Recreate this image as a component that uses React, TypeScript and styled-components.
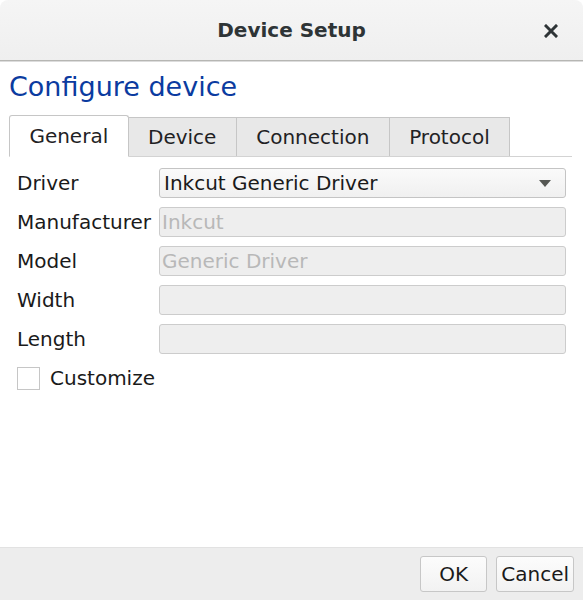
import * as React from "react";
import styled, { createGlobalStyle } from "styled-components";

const GlobalStyle = createGlobalStyle`
  html, body {
    margin: 0;
    padding: 0;
    background: #ffffff;
  }
  body {
    font-family: "DejaVu Sans", "Liberation Sans", sans-serif;
    color: #1a1a1a;
  }
`;

type Field = {
  label: string;
  value?: string;
};

const tabs = ["General", "Device", "Connection", "Protocol"];

const fields: Array<Field> = [
  { label: "Manufacturer", value: "Inkcut" },
  { label: "Model", value: "Generic Driver" },
  { label: "Width" },
  { label: "Length" },
];

function App() {
  const [activeTab, setActiveTab] = React.useState<string>("General");
  const [customize, setCustomize] = React.useState<boolean>(false);

  return (
    <DialogWrapper>
      <GlobalStyle />
      <TitleBar>
        <Title>Device Setup</Title>
        <CloseButton aria-label="Close">
          <svg width="14" height="14" viewBox="0 0 14 14">
            <path
              d="M2 2 L12 12 M12 2 L2 12"
              stroke="#2e3436"
              strokeWidth="3"
              strokeLinecap="square"
            />
          </svg>
        </CloseButton>
      </TitleBar>
      <Content>
        <Heading>Configure device</Heading>
        <TabBar>
          {tabs.map((tab) => (
            <Tab
              key={tab}
              $active={tab === activeTab}
              onClick={() => setActiveTab(tab)}
            >
              {tab}
            </Tab>
          ))}
        </TabBar>
        <Form>
          <Label>Driver</Label>
          <Combo>
            <span>Inkcut Generic Driver</span>
            <svg width="12" height="7" viewBox="0 0 12 7">
              <path d="M0 0 L12 0 L6 7 Z" fill="#555753" />
            </svg>
          </Combo>
          {fields.map((field) => (
            <React.Fragment key={field.label}>
              <Label>{field.label}</Label>
              <DisabledInput>{field.value}</DisabledInput>
            </React.Fragment>
          ))}
        </Form>
        <CheckRow onClick={() => setCustomize(!customize)}>
          <CheckBox>{customize ? "✓" : ""}</CheckBox>
          <span>Customize</span>
        </CheckRow>
      </Content>
      <ButtonBar>
        <DialogButton>OK</DialogButton>
        <DialogButton>Cancel</DialogButton>
      </ButtonBar>
    </DialogWrapper>
  );
}

export default App;

const DialogWrapper = styled.div`
  display: flex;
  flex-direction: column;
  width: 583px;
  height: 600px;
  background: #ffffff;
  overflow: hidden;
`;

const TitleBar = styled.header`
  position: relative;
  display: flex;
  justify-content: center;
  align-items: center;
  height: 61px;
  box-sizing: border-box;
  background: linear-gradient(#f5f5f5, #efefef);
  border-bottom: 1px solid #b6b6b3;
  border-radius: 8px 8px 0 0;
  box-shadow: 0 1px 0 #dcdcdc;
`;

const Title = styled.h1`
  margin: 0;
  font-size: 20px;
  font-weight: 700;
  color: #2e3436;
`;

const CloseButton = styled.div`
  position: absolute;
  right: 25px;
  top: 24px;
  display: flex;
`;

const Content = styled.section`
  flex: 1;
  display: flex;
  flex-direction: column;
  padding: 10px 10px 0 9px;
`;

const Heading = styled.h2`
  margin: 0 0 12px 0;
  font-size: 27px;
  font-weight: 400;
  color: #0b3ba0;
  line-height: 32px;
`;

const TabBar = styled.nav`
  display: flex;
  align-items: flex-end;
  height: 41px;
  margin-right: 1px;
  border-bottom: 1px solid #d3d3d3;
`;

const Tab = styled.div<{ $active: boolean }>`
  display: flex;
  align-items: center;
  justify-content: center;
  box-sizing: border-box;
  height: ${(p) => (p.$active ? "42px" : "39px")};
  margin-bottom: ${(p) => (p.$active ? "-1px" : "0")};
  padding: 0 19.4px;
  font-size: 20px;
  color: #1f2224;
  background: ${(p) => (p.$active ? "#ffffff" : "#e8e8e8")};
  border: 1px solid #c6c6c6;
  border-bottom: ${(p) => (p.$active ? "1px solid #ffffff" : "none")};
  border-left-width: ${(p) => (p.$active ? "1px" : "0")};
  border-radius: ${(p) => (p.$active ? "3px 3px 0 0" : "0")};
  cursor: pointer;

  &:first-child {
    border-left-width: 1px;
  }
`;

const Form = styled.div`
  display: grid;
  grid-template-columns: 142px 407px;
  grid-auto-rows: 30px;
  row-gap: 9px;
  align-items: center;
  margin-top: 11px;
  padding-left: 8px;
`;

const Label = styled.label`
  font-size: 20px;
  color: #1a1a1a;
  white-space: nowrap;
`;

const Combo = styled.div`
  display: flex;
  justify-content: space-between;
  align-items: center;
  height: 30px;
  box-sizing: border-box;
  padding: 0 14px 0 4px;
  font-size: 20px;
  color: #1a1a1a;
  background: linear-gradient(#fafafa, #f0f0f0);
  border: 1px solid #c4c4c4;
  border-radius: 3px;
`;

const DisabledInput = styled.div`
  display: flex;
  align-items: center;
  height: 30px;
  box-sizing: border-box;
  padding: 0 2px;
  font-size: 20px;
  color: #b8b8b8;
  background: #eeeeee;
  border: 1px solid #cccccc;
  border-radius: 3px;
`;

const CheckRow = styled.div`
  display: flex;
  align-items: center;
  gap: 10px;
  margin-top: 12px;
  padding-left: 8px;
  font-size: 20px;
  color: #1a1a1a;
  cursor: pointer;
`;

const CheckBox = styled.span`
  display: flex;
  align-items: center;
  justify-content: center;
  width: 23px;
  height: 23px;
  box-sizing: border-box;
  border: 1px solid #c6c6c6;
  background: #ffffff;
  font-size: 14px;
`;

const ButtonBar = styled.footer`
  display: flex;
  justify-content: flex-end;
  align-items: center;
  gap: 9px;
  height: 53px;
  box-sizing: border-box;
  padding: 0 9px 0 0;
  background: #ededed;
  border-top: 1px solid #e2e2e2;
`;

const DialogButton = styled.button`
  min-width: 67px;
  height: 36px;
  padding: 0 4px;
  font-family: "DejaVu Sans", "Liberation Sans", sans-serif;
  font-size: 20px;
  color: #1a1a1a;
  background: linear-gradient(#fcfcfc, #f2f2f2);
  border: 1px solid #c7c7c7;
  border-radius: 3px;
  cursor: pointer;
`;
